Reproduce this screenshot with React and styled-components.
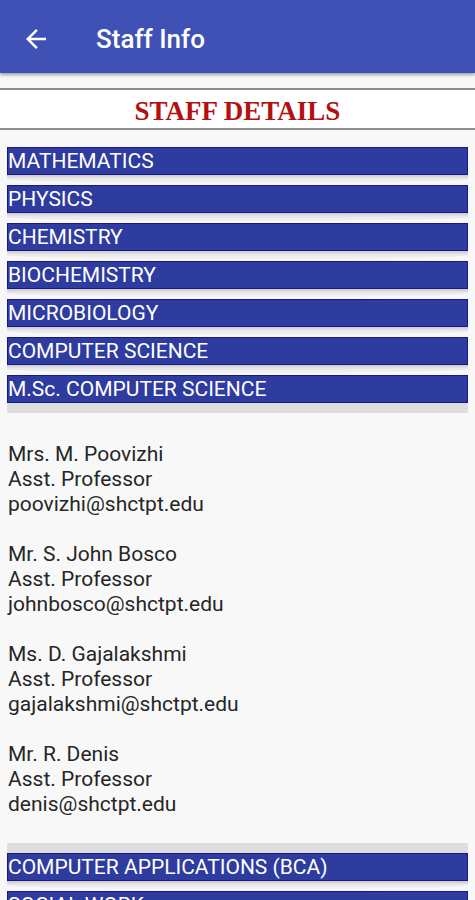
import React from "react"
import styled, { createGlobalStyle } from "styled-components"

const GlobalStyle = createGlobalStyle`
    body {
        margin: 0;
        background: #f8f8f8;
        font-family: Roboto, "Noto Sans", sans-serif;
    }
`

const AppBar = styled.header`
    height: 73px;
    box-sizing: border-box;
    padding-top: 4px;
    background-color: #3f51b5;
    display: flex;
    align-items: center;
    box-shadow: 0 2px 3px rgba(0, 0, 0, 0.35);
    color: #ffffff;
`

const BackButton = styled.button`
    width: 30px;
    height: 30px;
    margin-left: 21px;
    padding: 0;
    border: none;
    background: none;
    color: #ffffff;
    display: flex;
    align-items: center;
    justify-content: center;
`

const Title = styled.h1`
    margin: 0 0 0 45px;
    font-size: 26px;
    font-weight: 500;
`

const Heading = styled.h2`
    margin: 15px 0 0;
    height: 38px;
    line-height: 42px;
    background: #ffffff;
    border-top: 2px solid #8c8c8c;
    border-bottom: 2px solid #8c8c8c;
    text-align: center;
    font-family: "Liberation Serif", serif;
    font-size: 27px;
    font-weight: 700;
    color: #b3100f;
`

const DeptList = styled.div`
    padding: 17px 7px 0;
`

const DeptBar = styled.div`
    height: 26px;
    line-height: 27px;
    background-color: #2e3b9f;
    border: 1px solid #18188a;
    color: #ffffff;
    font-size: 21px;
    white-space: nowrap;
    overflow: hidden;
`

const Shade = styled.div`
    height: 8px;
    margin-bottom: 2px;
    background: linear-gradient(to bottom, #c9c9c9, #e9e9e9 45%, #f4f4f4);
    border-radius: 0 0 40% 40% / 0 0 4px 4px;
`

const Flat = styled.div`
    height: 10px;
    background-color: #dedede;
`

const StaffPanel = styled.div`
    padding: 29px 1px 26px;
    background: #f8f8f8;
`

const StaffEntry = styled.div`
    font-size: 21px;
    line-height: 25px;
    color: #262626;
    margin-bottom: 25px;

    &:last-child {
        margin-bottom: 0;
    }
`

const depts = [
    "MATHEMATICS",
    "PHYSICS",
    "CHEMISTRY",
    "BIOCHEMISTRY",
    "MICROBIOLOGY",
    "COMPUTER SCIENCE",
    "M.Sc. COMPUTER SCIENCE",
    "COMPUTER APPLICATIONS (BCA)",
    "SOCIAL WORK",
]

const staff = [
    { name: "Mrs. M. Poovizhi", role: "Asst. Professor", email: "poovizhi@shctpt.edu" },
    { name: "Mr. S. John Bosco", role: "Asst. Professor", email: "johnbosco@shctpt.edu" },
    { name: "Ms. D. Gajalakshmi", role: "Asst. Professor", email: "gajalakshmi@shctpt.edu" },
    { name: "Mr. R. Denis", role: "Asst. Professor", email: "denis@shctpt.edu" },
]

const Dept = ({ title, open }) => (
    <>
        <DeptBar>{title}</DeptBar>
        {open ? (
            <>
                <Flat />
                <StaffPanel>
                    {staff.map((s) => (
                        <StaffEntry key={s.email}>
                            {s.name}<br />{s.role}<br />{s.email}
                        </StaffEntry>
                    ))}
                </StaffPanel>
                <Flat />
            </>
        ) : (
            <Shade />
        )}
    </>
)

const App = () => {
    return (
        <>
            <GlobalStyle />
            <AppBar>
                <BackButton>
                    <svg width="30" height="30" viewBox="0 0 24 24" fill="currentColor">
                        <path d="M20 11H7.83l5.59-5.59L12 4l-8 8 8 8 1.41-1.41L7.83 13H20v-2z" />
                    </svg>
                </BackButton>
                <Title>Staff Info</Title>
            </AppBar>
            <Heading>STAFF DETAILS</Heading>
            <DeptList>
                {depts.map((d) => (
                    <Dept key={d} title={d} open={d === "M.Sc. COMPUTER SCIENCE"} />
                ))}
            </DeptList>
        </>
    )
}

export default App
